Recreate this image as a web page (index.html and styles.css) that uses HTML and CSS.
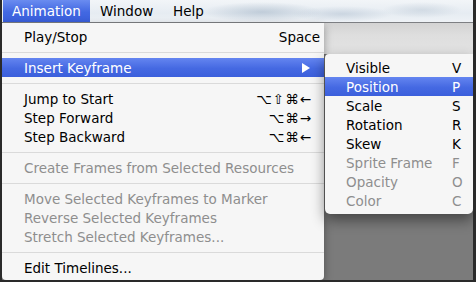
FILE: index.html
```html
<!DOCTYPE html>
<html>
<head>
<meta charset="utf-8">
<link rel="stylesheet" href="styles.css">
</head>
<body>
<div class="screen">
  <div class="menubar">
    <span class="mb-item active">Animation</span>
    <span class="mb-item">Window</span>
    <span class="mb-item">Help</span>
  </div>
  <div class="content">
    <div class="menu">
      <div class="row"><span>Play/Stop</span><span class="key key-space">Space</span></div>
      <div class="sep"></div>
      <div class="row hl"><span>Insert Keyframe</span><span class="key key-arrow"><svg width="8" height="10" viewBox="0 0 8 10"><path d="M0 0 L8 5 L0 10 Z" fill="#fff"/></svg></span></div>
      <div class="sep"></div>
      <div class="row"><span>Jump to Start</span><span class="key key-mod">⌥⇧⌘←</span></div>
      <div class="row"><span>Step Forward</span><span class="key key-mod">⌥⌘→</span></div>
      <div class="row"><span>Step Backward</span><span class="key key-mod">⌥⌘←</span></div>
      <div class="sep"></div>
      <div class="row dis"><span>Create Frames from Selected Resources</span></div>
      <div class="sep"></div>
      <div class="row dis"><span>Move Selected Keyframes to Marker</span></div>
      <div class="row dis"><span>Reverse Selected Keyframes</span></div>
      <div class="row dis"><span>Stretch Selected Keyframes...</span></div>
      <div class="sep"></div>
      <div class="row"><span>Edit Timelines...</span></div>
    </div>
    <div class="side">
      <div class="titlebar"></div>
      <div class="submenu">
        <div class="srow"><span>Visible</span><span>V</span></div>
        <div class="srow hl"><span>Position</span><span>P</span></div>
        <div class="srow"><span>Scale</span><span>S</span></div>
        <div class="srow"><span>Rotation</span><span>R</span></div>
        <div class="srow"><span>Skew</span><span>K</span></div>
        <div class="srow dis"><span>Sprite Frame</span><span>F</span></div>
        <div class="srow dis"><span>Opacity</span><span>O</span></div>
        <div class="srow dis"><span>Color</span><span>C</span></div>
      </div>
    </div>
  </div>
</div>
</body>
</html>
```
FILE: styles.css
```css
* { box-sizing: border-box; }
html, body { margin: 0; padding: 0; }
body {
  width: 476px;
  height: 282px;
  overflow: hidden;
  font-family: "DejaVu Sans", "Liberation Sans", sans-serif;
  font-size: 13.5px;
  color: #000;
}
.screen {
  width: 476px;
  height: 282px;
  background: #7b7b7b;
  border-left: 2px solid #2a2a2a;
  border-right: 3px solid #2a2a2a;
  border-bottom: 2px solid #2a2a2a;
  display: flex;
  flex-direction: column;
  overflow: hidden;
}
.menubar {
  height: 23px;
  flex: none;
  display: flex;
  align-items: stretch;
  padding-left: 1px;
  border-bottom: 1px solid #7d7f83;
  background:
    radial-gradient(ellipse 60px 10px at 260px 12px, rgba(160,178,196,.55), transparent),
    radial-gradient(ellipse 50px 8px at 340px 14px, rgba(170,186,204,.45), transparent),
    radial-gradient(ellipse 40px 8px at 420px 10px, rgba(175,190,205,.4), transparent),
    linear-gradient(#f2f5f8, #e6ecf2 60%, #eef2f6);
}
.mb-item {
  display: flex;
  align-items: center;
  padding: 0 9px 0 9px;
  margin-right: 1px;
  line-height: 22px;
}
.mb-item.active {
  color: #fff;
  width: 87px;
  background: linear-gradient(#6a8cf0, #4268e2 55%, #3a5fdb);
}
.mb-item:nth-child(2) { margin-left: 0; padding-left: 9px; width: 72px; }
.content {
  flex: 1;
  display: flex;
  min-height: 0;
}
.menu {
  width: 322px;
  flex: none;
  background: #f6f6f6;
  padding-top: 4px;
  border-radius: 0 0 4px 4px;
  box-shadow: 0 3px 8px rgba(0,0,0,.35);
  position: relative;
  z-index: 1;
}
.row {
  height: 19px;
  display: flex;
  align-items: center;
  justify-content: space-between;
  padding-left: 22px;
  white-space: nowrap;
}
.row.hl {
  color: #fff;
  background: linear-gradient(#6485f0, #4569e2 55%, #3b5fdc);
}
.dis { color: #8e8e8e; }
.key { display: flex; align-items: center; }
.key-space { margin-right: 4px; }
.key-mod { margin-right: 12px; letter-spacing: 1px; }
.key-arrow { margin-right: 14px; }
.sep {
  height: 12px;
  display: flex;
  align-items: center;
}
.sep::before {
  content: "";
  display: block;
  width: 100%;
  height: 1px;
  background: #dadada;
}
.side {
  flex: 1;
  display: flex;
  flex-direction: column;
  min-width: 0;
}
.titlebar {
  height: 31px;
  flex: none;
  background: linear-gradient(#d3d3d3, #dedede 40%, #e3e3e3);
}
.submenu {
  margin-left: 1px;
  background: #f6f6f6;
  padding: 4px 0;
  border-radius: 4px 0 5px 5px;
  box-shadow: 0 6px 14px rgba(0,0,0,.45);
  position: relative;
  z-index: 2;
}
.srow {
  height: 19px;
  display: grid;
  grid-template-columns: 1fr 21px;
  align-items: center;
  padding-left: 21px;
  white-space: nowrap;
}
.srow.hl {
  color: #fff;
  background: linear-gradient(#6485f0, #4569e2 55%, #3b5fdc);
}
```
